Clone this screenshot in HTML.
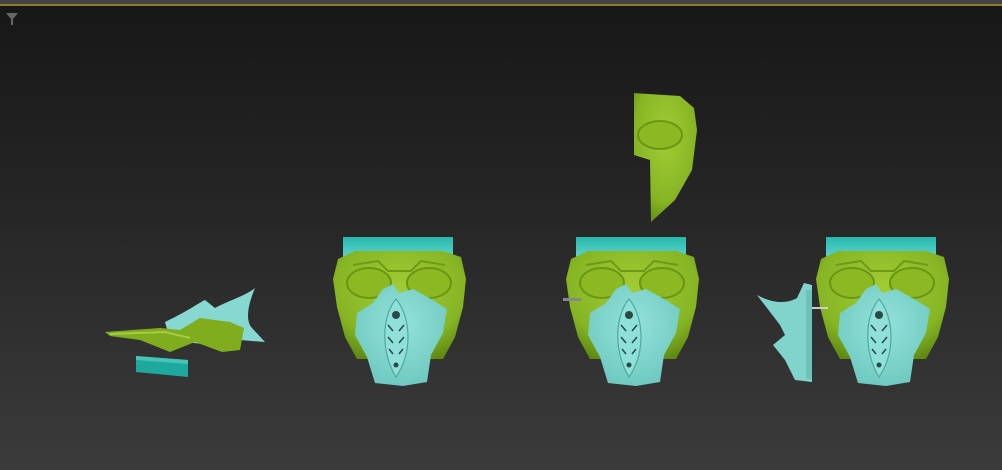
<!DOCTYPE html>
<html><head><meta charset="utf-8"><style>
html,body{margin:0;padding:0;width:1002px;height:470px;overflow:hidden;background:#1c1c1c}
</style></head><body>
<svg width="1002" height="470" viewBox="0 0 1002 470" xmlns="http://www.w3.org/2000/svg">
<defs>
<linearGradient id="bg" x1="0" y1="0" x2="0" y2="1">
<stop offset="0" stop-color="#171717"/><stop offset="0.45" stop-color="#262626"/><stop offset="1" stop-color="#3b3b3b"/>
</linearGradient>
<linearGradient id="band" x1="0" y1="0" x2="0" y2="1">
<stop offset="0" stop-color="#25b8ac"/><stop offset="1" stop-color="#5fd3c8"/>
</linearGradient>
<radialGradient id="grn" cx="0.5" cy="0.35" r="0.7">
<stop offset="0" stop-color="#a2cc34"/><stop offset="0.7" stop-color="#86b524"/><stop offset="1" stop-color="#5f8a12"/>
</radialGradient>
<radialGradient id="tl" cx="0.5" cy="0.4" r="0.7">
<stop offset="0" stop-color="#93e2da"/><stop offset="1" stop-color="#6ac6bd"/>
</radialGradient>
<g id="mask">
<rect x="10" y="0" width="110" height="20" fill="url(#band)"/>
<path d="M5,22 L22,14 L110,14 L128,20 L133,42 L130,70 L122,100 L110,122 L24,122 L12,100 L4,70 L0,42 Z" fill="url(#grn)"/>
<path d="M20,28 L45,24 L55,34 L78,34 L88,24 L112,28" stroke="#6f9a18" stroke-width="2" fill="none"/>
<ellipse cx="36" cy="46" rx="22" ry="15" fill="#8cb922" stroke="#6a9616" stroke-width="2"/>
<ellipse cx="96" cy="46" rx="22" ry="15" fill="#8cb922" stroke="#6a9616" stroke-width="2"/>
<path d="M50,52 L60,47 L66,56 L80,52 L98,62 L114,72 L110,96 L98,118 L94,145 L70,149 L42,146 L34,120 L22,98 L24,76 L40,66 Z" fill="url(#tl)"/>
<path d="M63,62 C78,80 80,115 63,140 C48,115 48,80 63,62 Z" fill="#8ee0d8" stroke="#4fa9a0" stroke-width="1.2"/>
<circle cx="63" cy="78" r="4" fill="#2a4a48"/>
<circle cx="63" cy="128" r="2.5" fill="#2a4a48"/>
<path d="M55,88 L60,94 M71,88 L66,94 M55,100 L60,106 M71,100 L66,106 M56,112 L60,117 M70,112 L66,117" stroke="#2a4a48" stroke-width="1.5"/>
</g>
</defs>
<rect width="1002" height="470" fill="url(#bg)"/>
<rect width="1002" height="4" fill="#444"/>
<rect y="4" width="1002" height="2" fill="#8c7a2e"/>
<path d="M6,13 L18,13 L13,19 L13,25 L11,25 L11,19 Z" fill="#666"/>
<path d="M165,322 C190,310 200,302 205,300 L215,308 C230,300 245,296 255,288 C248,305 245,320 252,328 L265,342 L240,340 L210,345 L170,340 Z" fill="#86d8d0"/>
<path d="M105,332 L160,328 L180,330 L200,318 L230,322 L244,328 L240,350 L222,352 L195,342 L170,352 L140,340 L110,336 Z" fill="#7fad1e"/>
<path d="M110,334 L165,332 L190,338" stroke="#a8cc40" stroke-width="2" fill="none"/>
<path d="M136,356 L188,360 L188,377 L136,372 Z" fill="#1ea99e"/>
<path d="M136,356 L188,360 L188,364 L136,360 Z" fill="#45c4b8"/>
<use href="#mask" transform="translate(333,237)"/>
<use href="#mask" transform="translate(566,237)"/>
<use href="#mask" transform="translate(816,237)"/>
<rect x="563" y="298" width="18" height="3" fill="#888"/>
<rect x="812" y="307" width="16" height="2" fill="#ccc"/>
<path d="M634,93 L680,96 L694,108 L697,130 L692,170 L675,200 L651,222 L650,160 L634,155 Z" fill="url(#grn)"/>
<ellipse cx="660" cy="135" rx="22" ry="14" fill="#8cb922" stroke="#6a9616" stroke-width="2"/>
<path d="M757,295 C770,302 785,305 797,298 L804,283 L812,285 L812,382 L795,380 L785,360 L773,345 L785,335 L780,325 Z" fill="#80d4cc"/>
<path d="M806,290 L812,290 L812,380 L806,378 Z" fill="#6cc2b9"/>
</svg>
</body></html>
